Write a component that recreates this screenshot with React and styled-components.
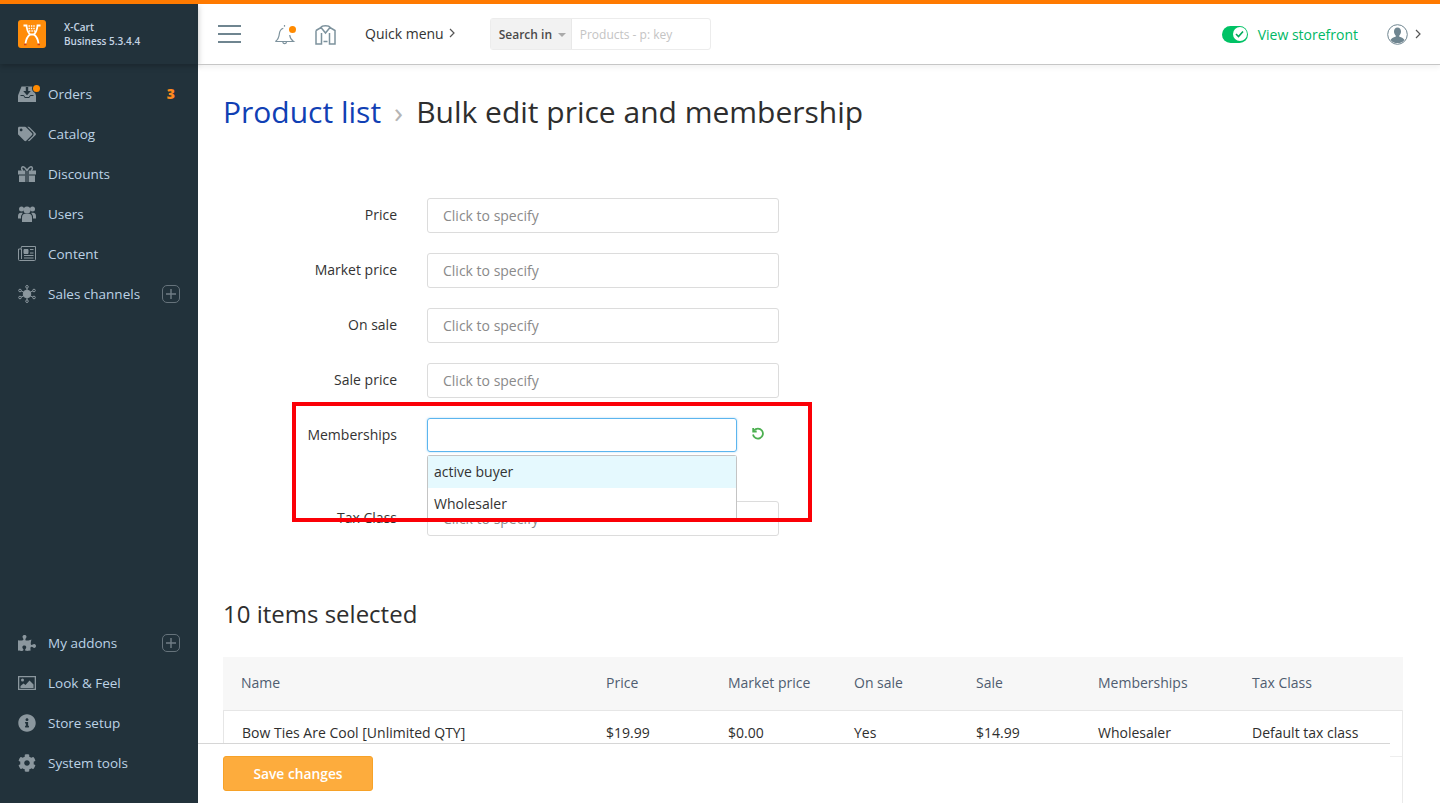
import React from 'react';
import styled, { createGlobalStyle } from 'styled-components';
import { FaTags, FaPuzzlePiece, FaInfoCircle, FaCog } from 'react-icons/fa';

const GlobalStyle = createGlobalStyle`
  html, body { margin: 0; padding: 0; height: 100%; overflow: hidden; }
  body { font-family: "Open Sans", "Liberation Sans", sans-serif; color: #2e2e2e; background: #fff; }
  * { box-sizing: border-box; }
`;

const Page = styled.div`
  position: relative;
  height: 803px;
  border-top: 4px solid #ff7a00;
  display: flex;
  overflow: hidden;
`;

const Sidebar = styled.aside`
  width: 198px;
  flex: none;
  background: #22323b;
  display: flex;
  flex-direction: column;
`;

const Brand = styled.div`
  height: 60px;
  padding: 16px 0 0 18px;
  display: flex;
  gap: 18px;
  box-shadow: 0 2px 6px rgba(0, 0, 0, 0.25);
  background: #22323b;
`;

const BrandText = styled.div`
  font-size: 10px;
  line-height: 14px;
  font-weight: 600;
  color: #c4d4e4;
`;

const Nav = styled.nav`
  flex: 1;
  padding: 10px 0 20px;
  display: flex;
  flex-direction: column;
  justify-content: space-between;
`;

const NavGroup = styled.div`
  display: flex;
  flex-direction: column;
`;

const NavItem = styled.div`
  height: 40px;
  display: flex;
  align-items: center;
  padding: 0 18px;
  font-size: 13.5px;
  color: #bdd2e6;
`;

const NavIcon = styled.span`
  position: relative;
  width: 30px;
  flex: none;
  display: flex;
  color: #8b979e;
  font-size: 18px;
`;

const NavDot = styled.span`
  position: absolute;
  top: 0;
  left: 15px;
  width: 7px;
  height: 7px;
  border-radius: 50%;
  background: #ff8a00;
  box-shadow: 0 0 0 1px #22323b;
`;

const NavLabel = styled.span`
  flex: 1;
  padding-bottom: 1px;
`;

const Count = styled.span`
  font-size: 14px;
  font-weight: 800;
  color: #ff8a1e;
  margin-right: 5px;
  padding-bottom: 2px;
`;

const PlusBox = styled.span`
  width: 18px;
  height: 18px;
  border: 1px solid #66737b;
  border-radius: 5px;
  display: flex;
  align-items: center;
  justify-content: center;
`;

const Main = styled.div`
  flex: 1;
  min-width: 0;
  display: flex;
  flex-direction: column;
`;

const TopBar = styled.header`
  height: 61px;
  flex: none;
  display: flex;
  align-items: center;
  padding: 0 19px 0 20px;
  border-bottom: 1px solid #c6c6c6;
  box-shadow: 0 3px 5px rgba(0, 0, 0, 0.05);
  font-size: 14px;
`;

const Burger = styled.div`
  width: 23px;
  height: 18px;
  margin-right: 33px;
  border-top: 2px solid #6f8590;
  border-bottom: 2px solid #6f8590;
  display: flex;
  align-items: center;
  &::before {
    content: "";
    display: block;
    width: 100%;
    height: 2px;
    background: #6f8590;
  }
`;

const BellWrap = styled.span`
  position: relative;
  display: flex;
  margin-right: 19px;
`;

const BellDot = styled.span`
  position: absolute;
  top: 4px;
  right: 0;
  width: 7px;
  height: 7px;
  border-radius: 50%;
  background: #ff8a00;
`;

const QuickMenu = styled.span`
  margin-left: 29px;
  padding-bottom: 2px;
  color: #333;
  display: flex;
  gap: 5px;
  align-items: center;
  margin-right: 35px;
`;

const Search = styled.div`
  width: 221px;
  height: 32px;
  border: 1px solid #ececec;
  border-radius: 3px;
  display: flex;
  font-size: 12px;
`;

const SearchIn = styled.div`
  width: 81px;
  background: #f2f2f2;
  border-right: 1px solid #e8e8e8;
  display: flex;
  align-items: center;
  padding-left: 8px;
  font-weight: 600;
  color: #4a4a4a;
  white-space: nowrap;
  &::after {
    content: "";
    margin-left: 6px;
    margin-top: 2px;
    border-left: 4px solid transparent;
    border-right: 4px solid transparent;
    border-top: 4px solid #aaa;
  }
`;

const SearchHint = styled.div`
  display: flex;
  align-items: center;
  padding-left: 8px;
  color: #c4c4c4;
`;

const Spacer = styled.div`
  flex: 1;
`;

const Toggle = styled.span`
  width: 26px;
  height: 17px;
  border-radius: 9px;
  background: #00c265;
  display: flex;
  align-items: center;
  justify-content: flex-end;
  padding-right: 1px;
  margin-right: 10px;
`;

const ToggleKnob = styled.span`
  width: 14px;
  height: 14px;
  border-radius: 50%;
  background: #fff;
  display: flex;
  align-items: center;
  justify-content: center;
`;

const StoreLink = styled.span`
  color: #00b865;
  margin-right: 29px;
`;

const ChevronGap = styled.span`
  width: 7px;
`;

const Content = styled.main`
  flex: 1;
  padding: 0 37px 0 25px;
  min-height: 0;
  overflow: hidden;
`;

const Title = styled.h1`
  margin: 25px 0 0;
  font-size: 30px;
  line-height: 44px;
  font-weight: 400;
  color: #2e2e2e;
  display: flex;
  align-items: center;
`;

const Crumb = styled.span`
  color: #1040b4;
`;

const Separator = styled.span`
  color: #b5b5b5;
  margin: 0 13px;
  font-size: 30px;
`;

const Form = styled.form`
  position: relative;
  margin-top: 64px;
  display: flex;
  flex-direction: column;
`;

const Row = styled.div`
  display: flex;
  align-items: center;
  gap: 30px;
  margin-bottom: ${p => p.$gap}px;
`;

const Label = styled.label`
  width: 174px;
  padding-bottom: 2px;
  text-align: right;
  font-size: 14px;
  color: #333;
`;

const Field = styled.div`
  width: 352px;
  height: 35px;
  padding: 0 15px;
  border: 1px solid #dcdcdc;
  border-radius: 3px;
  font-size: 14px;
  line-height: 34px;
  color: #8a8a8a;
`;

const ActiveWrap = styled.div`
  position: relative;
  display: flex;
  align-items: center;
`;

const ActiveField = styled.div`
  width: 310px;
  height: 34px;
  border: 1px solid #5cb5ee;
  border-radius: 3px;
  box-shadow: 0 0 2px rgba(92, 181, 238, 0.6);
`;

const Reset = styled.span`
  display: flex;
  margin-left: 14px;
  margin-top: -2px;
`;

const Dropdown = styled.ul`
  position: absolute;
  z-index: 2;
  top: 37px;
  left: 0;
  width: 310px;
  margin: 0;
  padding: 0;
  list-style: none;
  background: #fff;
  border: 1px solid #c4c4c4;
  border-bottom: 0;
  border-radius: 3px 3px 0 0;
  font-size: 14px;
  color: #333;
`;

const Option = styled.li`
  height: 32px;
  line-height: 32px;
  padding-left: 6px;
  background: ${p => (p.$active ? '#e5f9fe' : '#fff')};
`;

const RedBox = styled.div`
  position: absolute;
  z-index: 3;
  left: 69px;
  top: 204px;
  width: 520px;
  height: 120px;
  border: 4px solid #fb0007;
`;

const Subtitle = styled.h2`
  margin: 61px 0 0;
  font-size: 24px;
  line-height: 34px;
  font-weight: 400;
  color: #2e2e2e;
`;

const Table = styled.div`
  margin-top: 26px;
  width: 1180px;
  font-size: 14px;
  border-right: 1px solid #eaeaea;
  min-height: 200px;
`;

const HeadRow = styled.div`
  display: grid;
  grid-template-columns: 365px 122px 126px 122px 122px 154px 1fr;
  padding: 0 0 2px 18px;
  margin-right: -1px;
  height: 53px;
  align-items: center;
  background: #f7f7f7;
  color: #4f5d70;
`;

const BodyRow = styled.div`
  display: grid;
  grid-template-columns: 364px 122px 126px 122px 122px 154px 1fr;
  padding: 12px 0 0 18px;
  height: 47px;
  border-top: 1px solid #e6e6e6;
  border-left: 1px solid #e6e6e6;
  border-bottom: 1px solid #eee;
  color: #2e2e2e;
`;

const Footer = styled.footer`
  position: absolute;
  z-index: 1;
  left: 198px;
  bottom: 0;
  width: 1192px;
  height: 60px;
  border-top: 1px solid #d6d6d6;
  background: #fff;
  padding: 12px 25px 0;
`;

const SaveButton = styled.button`
  width: 150px;
  height: 35px;
  border: 1px solid #f7a228;
  border-radius: 3px;
  background: #fdac3d;
  color: #fff;
  font-family: inherit;
  font-size: 13.8px;
  font-weight: 600;
`;

const GREY = '#8b979e';
const DARK = '#22323b';

const OrdersIcon = () => (
  <svg width="18" height="18" viewBox="0 0 18 18">
    <path fill={GREY} d="M3.500 1.500h11l3.500 9v6.500H0v-6.500z" />
    <path fill={DARK} d="M7.800 2h2.400v4h2.600l-3.800 4.200-3.800-4.200h2.600z" />
    <path fill="none" stroke={DARK} d="M2.500 10.500h3.300l1 2h4.400l1-2h3.300" />
  </svg>
);

const GiftIcon = () => (
  <svg width="18" height="18" viewBox="0 0 18 18">
    <path fill="none" stroke={GREY} strokeWidth="1.500" d="M9 5.500C7 2.500 6 1.500 4.800 1.700 3.300 2 3 4.700 5 5.500M9 5.500c2-3 3-4 4.200-3.800 1.500.3 1.800 3 -.2 3.800" />
    <path fill={GREY} d="M0 5.500h7v4H0zM11 5.500h7v4h-7zM1 10.500h6V17H1zM11 10.500h6V17h-6z" />
    <path fill={GREY} opacity="0.35" d="M7 5.500h4V17H7z" />
  </svg>
);

const UsersIcon = () => (
  <svg width="18" height="18" viewBox="0 0 18 18" fill={GREY}>
    <circle cx="3.500" cy="4" r="2.500" />
    <circle cx="14.500" cy="4" r="2.500" />
    <path d="M0 11.500c0-2.500 1-3.700 3-3.700h1.800L3 11v2.500H0zM18 11.500c0-2.500-1-3.700-3-3.700h-1.800L15 11v2.500h3z" />
    <circle cx="9" cy="5" r="3.500" />
    <path d="M4 17v-4.500c0-2.500 1.500-3.700 3-3.700h4c1.500 0 3 1.200 3 3.700V17z" />
  </svg>
);

const ContentIcon = () => (
  <svg width="18" height="18" viewBox="0 0 18 18" fill="none" stroke={GREY}>
    <path d="M3.500 1.500h14v13a1 1 0 0 1-1 1h-15a1 1 0 0 1-1-1V4h2.500z" />
    <path d="M3.500 4v10" />
    <path fill={GREY} d="M6 4.500h4v4H6z" />
    <path d="M12 4.500h3.500M12 8h3.500M6 10.500h9.500M6 13h9.500" />
  </svg>
);

const ChannelsIcon = () => (
  <svg width="18" height="18" viewBox="0 0 18 18" fill="none" stroke={GREY}>
    <path d="M9 9 2.500 5.500M9 9l6.500-3.500M9 9l-6.500 3.500M9 9l6.500 3.500M9 9V2.500M9 9v6.500" />
    <circle cx="9" cy="9" r="3.800" fill={GREY} />
    <circle cx="9" cy="1.800" r="1.300" fill={DARK} />
    <circle cx="9" cy="16.200" r="1.300" fill={DARK} />
    <circle cx="2" cy="5.500" r="1.300" fill={DARK} />
    <circle cx="16" cy="5.500" r="1.300" fill={DARK} />
    <circle cx="2" cy="12.500" r="1.300" fill={DARK} />
    <circle cx="16" cy="12.500" r="1.300" fill={DARK} />
  </svg>
);

const PictureIcon = () => (
  <svg width="18" height="16" viewBox="0 0 18 16">
    <path fill={GREY} d="M0 1h18v14H0zm1.300 1.300v11.400h15.400V2.300z" />
    <circle cx="4.500" cy="5" r="1.500" fill={GREY} />
    <path fill={GREY} d="M2.500 13v-2l3-2.500 2 1.500 4-4.500 4 4V13z" />
  </svg>
);

const PlusIcon = () => (
  <svg width="10" height="10" viewBox="0 0 10 10" stroke="#717e86" strokeWidth="1.400">
    <path d="M5 0v10M0 5h10" />
  </svg>
);

const Logo = () => (
  <svg width="28" height="28" viewBox="0 0 28 28">
    <rect width="28" height="28" rx="3" fill="#ff8c0a" />
    <path d="M5.500 5.500h3c.3 4 1.500 7 3.500 9h4c2-2 3.200-5 3.500-9h3" fill="none" stroke="#fff" strokeWidth="1.800" />
    <path d="M12 14.500c-2 1.500-4 5-4.500 9M16 14.500c2 1.500 4 5 4.500 9" fill="none" stroke="#fff" strokeWidth="1.800" />
    <path d="M10.500 6h7M10.500 8.500h7M11 11h6" stroke="#fff" strokeWidth="1.400" strokeDasharray="1.400 1" />
    <path d="M6 24.500h2.500M19.500 24.500H22" stroke="#d2401a" strokeWidth="1.400" />
  </svg>
);

const Bell = () => (
  <svg width="22" height="24" viewBox="0 0 22 24" fill="none" stroke="#7d929d" strokeWidth="1.200">
    <path d="M1.500 19.500c2.500-2 3.500-4 3.800-7.500.3-3 1.500-5 4-5.800" />
    <path d="M15.700 13c.3 3 1.300 4.700 3.800 6.500h-18" />
    <path d="M8.800 20c.3 2.200 3.400 2.200 3.700 0" />
    <path d="M10.500 3v1.700" />
  </svg>
);

const StoreIcon = () => (
  <svg width="21" height="21" viewBox="0 0 21 21" fill="none" stroke="#7d929d" strokeWidth="1.500">
    <path d="M1 6.500 6 3.500 10.500 9 15 3.500l5 3v13.500H14.500V9M1 6.500V20h5.500V9" />
    <path d="M6 3.500C7 1 14 1 15 3.500M8.500 17.500h4" />
  </svg>
);

const Chevron = () => (
  <svg width="6" height="10" viewBox="0 0 6 10" fill="none" stroke="#555" strokeWidth="1.200">
    <path d="M1 1l4 4-4 4" />
  </svg>
);

const Avatar = () => (
  <svg width="21" height="21" viewBox="0 0 21 21">
    <circle cx="10.500" cy="10.500" r="9.800" fill="#fff" stroke="#6f8590" strokeWidth="1" />
    <path fill="#6f8590" d="M10.500 3.500c2.300 0 3.500 1.800 3.500 4 0 1.700-.8 3.300-1.700 4v1.200c2.500.7 4.500 1.800 5.200 3.200a9.300 9.300 0 0 1-14 0c.7-1.400 2.700-2.500 5.200-3.200v-1.200c-.9-.7-1.700-2.300-1.700-4 0-2.200 1.200-4 3.500-4z" />
  </svg>
);

const topItems = [
  { label: 'Orders', icon: <OrdersIcon />, dot: true, count: 3 },
  { label: 'Catalog', icon: <FaTags /> },
  { label: 'Discounts', icon: <GiftIcon /> },
  { label: 'Users', icon: <UsersIcon /> },
  { label: 'Content', icon: <ContentIcon /> },
  { label: 'Sales channels', icon: <ChannelsIcon />, plus: true },
];

const bottomItems = [
  { label: 'My addons', icon: <FaPuzzlePiece />, plus: true },
  { label: 'Look & Feel', icon: <PictureIcon /> },
  { label: 'Store setup', icon: <FaInfoCircle /> },
  { label: 'System tools', icon: <FaCog /> },
];

const columns = ['Name', 'Price', 'Market price', 'On sale', 'Sale', 'Memberships', 'Tax Class'];
const cells = ['Bow Ties Are Cool [Unlimited QTY]', '$19.99', '$0.00', 'Yes', '$14.99', 'Wholesaler', 'Default tax class'];

function MenuEntry({ item }) {
  return (
    <NavItem>
      <NavIcon>
        {item.icon}
        {item.dot && <NavDot />}
      </NavIcon>
      <NavLabel>{item.label}</NavLabel>
      {item.count && <Count>{item.count}</Count>}
      {item.plus && <PlusBox><PlusIcon /></PlusBox>}
    </NavItem>
  );
}

export default function App() {
  return (
    <>
      <GlobalStyle />
      <Page>
        <Sidebar>
          <Brand>
            <Logo />
            <BrandText>
              X-Cart
              <br />
              Business 5.3.4.4
            </BrandText>
          </Brand>
          <Nav>
            <NavGroup>
              {topItems.map(item => <MenuEntry key={item.label} item={item} />)}
            </NavGroup>
            <NavGroup>
              {bottomItems.map(item => <MenuEntry key={item.label} item={item} />)}
            </NavGroup>
          </Nav>
        </Sidebar>
        <Main>
          <TopBar>
            <Burger />
            <BellWrap>
              <Bell />
              <BellDot />
            </BellWrap>
            <StoreIcon />
            <QuickMenu>
              Quick menu <Chevron />
            </QuickMenu>
            <Search>
              <SearchIn>Search in</SearchIn>
              <SearchHint>Products - p: key</SearchHint>
            </Search>
            <Spacer />
            <Toggle>
              <ToggleKnob>
                <svg width="9" height="8" viewBox="0 0 9 8" fill="none" stroke="#00a85a" strokeWidth="1.600">
                  <path d="M1 4l2.500 2.500L8 1.500" />
                </svg>
              </ToggleKnob>
            </Toggle>
            <StoreLink>View storefront</StoreLink>
            <Avatar />
            <ChevronGap />
            <Chevron />
          </TopBar>
          <Content>
            <Title>
              <Crumb>Product list</Crumb>
              <Separator>›</Separator>
              Bulk edit price and membership
            </Title>
            <Form>
              <Row $gap={20}>
                <Label>Price</Label>
                <Field>Click to specify</Field>
              </Row>
              <Row $gap={20}>
                <Label>Market price</Label>
                <Field>Click to specify</Field>
              </Row>
              <Row $gap={20}>
                <Label>On sale</Label>
                <Field>Click to specify</Field>
              </Row>
              <Row $gap={20}>
                <Label>Sale price</Label>
                <Field>Click to specify</Field>
              </Row>
              <Row $gap={49}>
                <Label>Memberships</Label>
                <ActiveWrap>
                  <ActiveField />
                  <Reset>
                    <svg width="14" height="14" viewBox="0 0 14 14" fill="none" stroke="#4caf50" strokeWidth="1.800">
                      <path d="M3 3.500a5 5 0 1 1-1 4" />
                      <path d="M2.200 1v3.500h3.500" />
                    </svg>
                  </Reset>
                  <Dropdown>
                    <Option $active>active buyer</Option>
                    <Option>Wholesaler</Option>
                  </Dropdown>
                </ActiveWrap>
              </Row>
              <Row $gap={0}>
                <Label>Tax Class</Label>
                <Field>Click to specify</Field>
              </Row>
              <RedBox />
            </Form>
            <Subtitle>10 items selected</Subtitle>
            <Table>
              <HeadRow>
                {columns.map(c => <span key={c}>{c}</span>)}
              </HeadRow>
              <BodyRow>
                {cells.map(c => <span key={c}>{c}</span>)}
              </BodyRow>
            </Table>
          </Content>
        </Main>
        <Footer>
          <SaveButton>Save changes</SaveButton>
        </Footer>
      </Page>
    </>
  );
}
